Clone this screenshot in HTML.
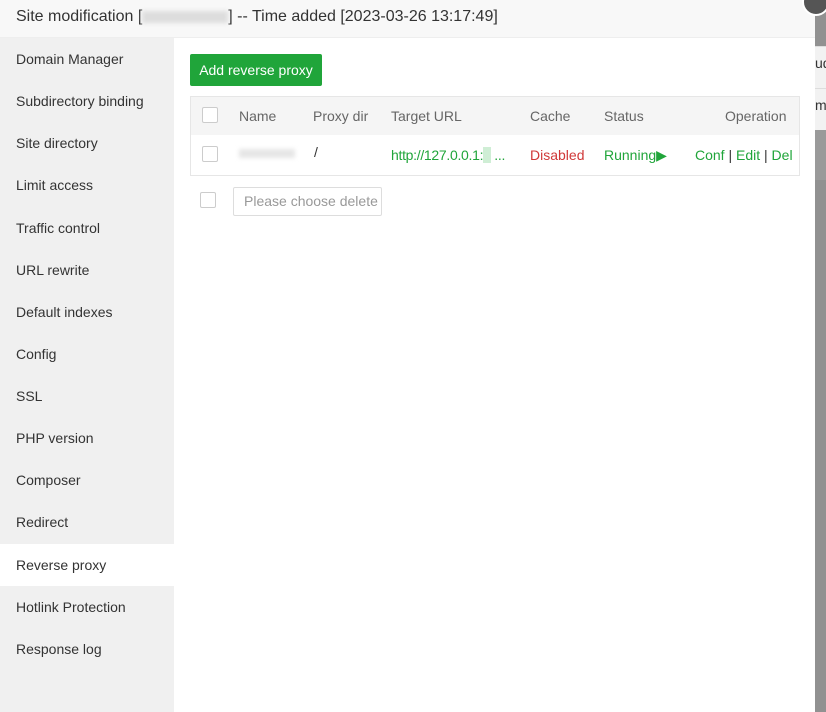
<!DOCTYPE html>
<html><head><style>
*{margin:0;padding:0;box-sizing:border-box}
body{width:826px;height:712px;overflow:hidden;background:#919191;font-family:"Liberation Sans",sans-serif;position:relative}
.right{position:absolute;left:815px;top:0;width:11px;height:712px;background:#919191}
.right .p{position:absolute;left:0;top:46px;width:11px;height:84px;background:#f2f2f2;border-top:1px solid #ddd;font-size:14px;color:#333;overflow:hidden}
.right .q{position:absolute;left:0;top:130px;width:11px;height:50px;background:#9a9a9a}
.dlg{position:absolute;left:0;top:0;width:815px;height:712px;background:#fff}
.hd{height:38px;background:#f8f8f8;border-bottom:1px solid #eee;font-size:16px;color:#333;padding:8px 16px;white-space:nowrap}
.blur{display:inline-block;width:86px;height:12px;background:#ddd;vertical-align:middle;filter:blur(2px)}
.side{position:absolute;left:0;top:38px;width:174px;height:674px;background:#f0f0f0}
.side div{height:42.14px;line-height:42px;padding-left:16px;font-size:14px;color:#333}
.side .on{background:#fff}
.btn{position:absolute;left:190px;top:54px;width:132px;height:32px;background:#20a53a;color:#fff;font-size:14px;line-height:32px;text-align:center;border-radius:2px}
.tbl{position:absolute;left:190px;top:96px;width:610px;height:80px;border:1px solid #e6e6e6;font-size:14px;color:#666}
.th{height:38px;background:#f5f5f5;position:relative}
.tr{height:40px;position:relative}
.tbl span{position:absolute}
.cb{position:absolute;width:16px;height:16px;border:1px solid #ccc;border-radius:2px;background:#fff}
.g{color:#20a53a}
.sel{position:absolute;left:233px;top:187px;width:149px;height:29px;border:1px solid #ddd;border-radius:2px;font-size:14px;color:#999;line-height:27px;padding-left:10px;white-space:nowrap;overflow:hidden}
.x{position:absolute;left:802px;top:-12px;width:28px;height:28px;border-radius:50%;background:#555;border:2px solid #fff}
</style></head><body>
<div class="right"><div class="p"><div style="position:absolute;top:8px;left:0">ud</div><div style="position:absolute;top:50px;left:0">m</div><div style="position:absolute;top:41px;width:11px;border-top:1px solid #ddd"></div></div><div class="q"></div></div>
<div class="dlg">
<div class="hd">Site modification [<span class="blur"></span>] -- Time added [2023-03-26 13:17:49]</div>
<div class="side">
<div>Domain Manager</div><div>Subdirectory binding</div><div>Site directory</div><div>Limit access</div><div>Traffic control</div><div>URL rewrite</div><div>Default indexes</div><div>Config</div><div>SSL</div><div>PHP version</div><div>Composer</div><div>Redirect</div><div class="on">Reverse proxy</div><div>Hotlink Protection</div><div>Response log</div>
</div>
<div class="btn">Add reverse proxy</div>
<div class="tbl">
<div class="th"><div class="cb" style="left:11px;top:10px"></div>
<span style="left:48px;top:11px">Name</span><span style="left:122px;top:11px">Proxy dir</span><span style="left:200px;top:11px">Target URL</span><span style="left:339px;top:11px">Cache</span><span style="left:413px;top:11px">Status</span><span style="left:534px;top:11px">Operation</span></div>
<div class="tr"><div class="cb" style="left:11px;top:11px"></div>
<span style="left:48px;top:14px;width:56px;height:9px;background:#e6e6e6;filter:blur(2px)"></span>
<span style="left:123px;top:9px;color:#333">/</span>
<span class="g" style="left:200px;top:12px;font-size:14px;letter-spacing:-0.3px">http://127.0.0.1:<span style="position:static;background:#cfeed5;color:transparent">8</span> ...</span>
<span style="left:339px;top:12px;color:#d03838">Disabled</span>
<span class="g" style="left:413px;top:12px">Running▶</span>
<span class="g" style="left:504px;top:12px">Conf <span style="position:static;color:#333">|</span> Edit <span style="position:static;color:#333">|</span> Del</span></div>
</div>
<div class="cb" style="left:200px;top:192px"></div>
<div class="sel">Please choose delete</div>
</div>
<div class="x"></div>
</body></html>
